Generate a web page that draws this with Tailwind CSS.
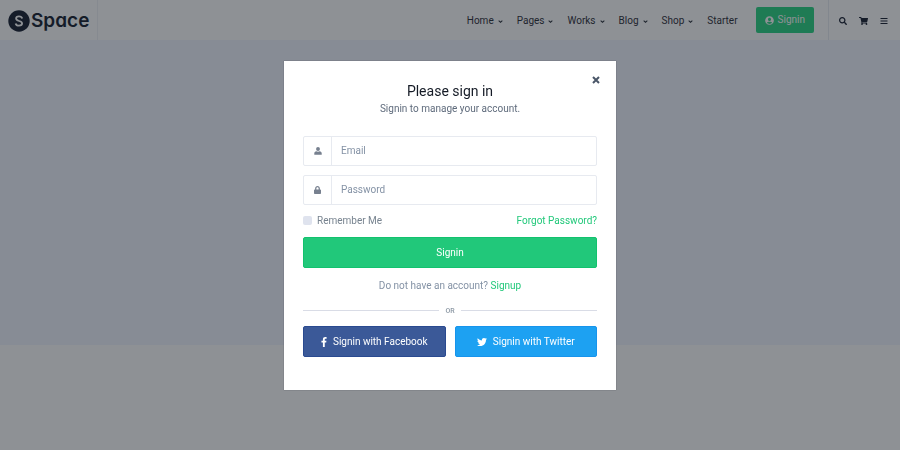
<!DOCTYPE html>
<html lang="en">
<head>
    <meta charset="UTF-8">
    <meta name="viewport" content="width=device-width, initial-scale=1.0">
    <title>Space - Sign in</title>
    <script src="https://cdn.jsdelivr.net/npm/@tailwindcss/browser@4"></script>
</head>
<body class="min-h-screen bg-white font-['Roboto',sans-serif] text-[10px] leading-4 text-[#4a5668]">

    <!-- Header -->
    <header class="flex h-10 items-stretch justify-between text-[#1e222b]">
        <a href="#" class="flex items-center gap-px border-r border-[#eef0f4] pt-px pr-2 pl-2">
            <svg class="h-6 w-[22px]" viewBox="0 0 22 24">
                <circle cx="11" cy="12" r="10.7" fill="#0c1426"/>
                <path d="M14.200 9.500C13.800 8.200 12.600 7.400 11 7.400c-1.800 0-2.900.9-2.900 2.200 0 3.100 6 1.700 6 4.700 0 1.400-1.300 2.300-3.100 2.300-1.700 0-3-.8-3.400-2.200" fill="none" stroke="#fff" stroke-width="1.800"/>
            </svg>
            <span class="text-[19px] leading-6 font-semibold text-[#0c1426] font-['Inter',sans-serif] [font-feature-settings:'cv11']">Space</span>
        </a>
        <div class="flex items-stretch">
            <nav class="flex items-center gap-3.5 pt-px pr-[18px] text-[#1e242e]">
                <a href="#" class="flex items-center gap-1">Home <svg class="mt-px size-[5px]" viewBox="0 0 6 6" fill="none" stroke="currentColor" stroke-width="1.300"><path d="M.8 2l2.200 2 2.200-2"/></svg></a>
                <a href="#" class="flex items-center gap-1">Pages <svg class="mt-px size-[5px]" viewBox="0 0 6 6" fill="none" stroke="currentColor" stroke-width="1.300"><path d="M.8 2l2.200 2 2.200-2"/></svg></a>
                <a href="#" class="flex items-center gap-1">Works <svg class="mt-px size-[5px]" viewBox="0 0 6 6" fill="none" stroke="currentColor" stroke-width="1.300"><path d="M.8 2l2.200 2 2.200-2"/></svg></a>
                <a href="#" class="flex items-center gap-1">Blog <svg class="mt-px size-[5px]" viewBox="0 0 6 6" fill="none" stroke="currentColor" stroke-width="1.300"><path d="M.8 2l2.200 2 2.200-2"/></svg></a>
                <a href="#" class="flex items-center gap-1">Shop <svg class="mt-px size-[5px]" viewBox="0 0 6 6" fill="none" stroke="currentColor" stroke-width="1.300"><path d="M.8 2l2.200 2 2.200-2"/></svg></a>
                <a href="#">Starter</a>
            </nav>
            <button type="button" class="mr-3.5 flex h-[26px] items-center gap-1 self-center rounded-xs bg-[#21d27d] px-[9px] text-white">
                <svg class="size-[9px]" viewBox="0 0 496 512" fill="currentColor"><path d="M248 8C111 8 0 119 0 256s111 248 248 248 248-111 248-248S385 8 248 8zm0 96c48.600 0 88 39.400 88 88s-39.400 88-88 88-88-39.400-88-88 39.400-88 88-88zm0 344c-58.700 0-111.300-26.600-146.500-68.200 18.800-35.400 55.600-59.800 98.500-59.800 2.400 0 4.800.4 7.100 1.100 13 4.200 26.600 6.900 40.900 6.900s28-2.700 40.900-6.900c2.300-.7 4.700-1.100 7.100-1.100 42.900 0 79.700 24.400 98.500 59.800C359.300 421.400 306.700 448 248 448z"/></svg>
                Signin
            </button>
            <div class="flex items-center gap-3 border-l border-[#e7eaf0] pt-px pr-3 pl-2.5 text-[#0c1426]">
                <button type="button" aria-label="Search"><svg class="size-2" viewBox="0 0 512 512" fill="currentColor"><path d="M505 442.700L405.300 343c-4.500-4.500-10.600-7-17-7H372c27.600-35.300 44-79.700 44-128C416 93.100 322.900 0 208 0S0 93.100 0 208s93.100 208 208 208c48.300 0 92.700-16.400 128-44v16.300c0 6.400 2.500 12.500 7 17l99.700 99.700c9.400 9.400 24.600 9.400 33.900 0l28.300-28.300c9.400-9.400 9.400-24.600.1-34zM208 336c-70.700 0-128-57.200-128-128 0-70.700 57.200-128 128-128 70.700 0 128 57.200 128 128 0 70.700-57.200 128-128 128z"/></svg></button>
                <button type="button" aria-label="Cart"><svg class="h-2 w-[9px]" viewBox="0 0 576 512" fill="currentColor"><path d="M528 301l47-208c4-15-8-29-23-29H159l-9-45C148 8 138 0 126 0H24C11 0 0 11 0 24v16c0 13 11 24 24 24h70l70 343c-17 10-28 28-28 49 0 31 25 56 56 56s56-25 56-56c0-16-6-30-17-40h210c-10 10-17 24-17 40 0 31 25 56 56 56s56-25 56-56c0-22-13-41-32-50l5-25c4-15-8-29-23-29H218l-7-32h294c11 0 21-8 23-19z"/></svg></button>
                <button type="button" aria-label="Menu"><svg class="size-2" viewBox="0 0 8 8" fill="currentColor"><path d="M.5 1h7v1h-7zM.5 3.500h7v1h-7zM.5 6h7v1h-7z"/></svg></button>
            </div>
        </div>
    </header>

    <!-- Hero -->
    <section class="h-[305px] bg-[#f1f4ff]"></section>

    <!-- Sign in modal -->
    <div class="fixed inset-0 flex items-center justify-center bg-[#1e242c]/50">
        <div role="dialog" aria-labelledby="signinTitle" class="relative w-full max-w-[332px] bg-white px-[19px] pt-5 pb-[33px] shadow-[0_0_1px_#1e222b80]">
            <button type="button" aria-label="Close" class="absolute top-[15px] right-4 text-[#4a5668]">
                <svg class="size-2" viewBox="0 0 8 8" fill="none" stroke="currentColor" stroke-width="2"><path d="M1 1l6 6M7 1L1 7"/></svg>
            </button>

            <div class="mb-[19px] text-center">
                <h1 id="signinTitle" class="text-sm text-[#151b26]">Please sign in</h1>
                <p class="text-[#5f6b7c]">Signin to manage your account.</p>
            </div>

            <form>
                <div class="mb-[9px] flex h-[30px] rounded-xs border border-[#e7eaf0]">
                    <label for="email" aria-label="Email" class="flex w-7 items-center justify-center border-r border-[#e7eaf0] text-[#77808f]">
                        <svg class="size-2" viewBox="0 0 14 14" fill="currentColor"><circle cx="7" cy="3.600" r="3.400"/><path d="M.5 13.500V11C.5 9 2 8 4 7.500c2 1 4 1 6 0 2 .5 3.500 1.500 3.500 3.500v2.500z"/></svg>
                    </label>
                    <input type="email" id="email" placeholder="Email" class="min-w-0 flex-1 px-[9px] outline-none placeholder:text-[#8492a5]">
                </div>
                <div class="mb-2 flex h-[30px] rounded-xs border border-[#e7eaf0]">
                    <label for="password" aria-label="Password" class="flex w-7 items-center justify-center border-r border-[#e7eaf0] text-[#77808f]">
                        <svg class="h-2 w-[7px]" viewBox="0 0 448 512" fill="currentColor"><path d="M400 224h-24v-72C376 68.200 307.800 0 224 0S72 68.200 72 152v72H48c-26.500 0-48 21.500-48 48v192c0 26.500 21.500 48 48 48h352c26.500 0 48-21.500 48-48V272c0-26.500-21.500-48-48-48zm-104 0H152v-72c0-39.700 32.300-72 72-72s72 32.300 72 72v72z"/></svg>
                    </label>
                    <input type="password" id="password" placeholder="Password" class="min-w-0 flex-1 px-[9px] outline-none placeholder:text-[#8492a5]">
                </div>
                <div class="mb-2 flex items-center justify-between">
                    <label for="remember" class="flex items-center gap-[5px] text-[#77838f]">
                        <input type="checkbox" id="remember" class="size-[9px] appearance-none rounded-xs bg-[#dfe3ee] checked:bg-[#21c87a]">
                        Remember Me
                    </label>
                    <a href="#" class="text-[#21c87a]">Forgot Password?</a>
                </div>
                <button type="submit" class="h-[31px] w-full rounded-xs border border-[#12c26e] bg-[#21c87a] pt-px text-white">Signin</button>
            </form>

            <p class="mt-2.5 text-center text-[#8492a5]">Do not have an account? <a href="#" class="text-[#21c87a]">Signup</a></p>

            <div class="mt-[9px] mb-[7px] flex items-center gap-1.5 text-[7px] font-medium text-[#8c98a4]">
                <hr class="flex-1 border-[#d9dce6]">OR<hr class="flex-1 border-[#d9dce6]">
            </div>

            <div class="grid grid-cols-2 gap-[9px] text-white">
                <button type="button" class="flex h-[31px] items-center justify-center gap-1.5 rounded-xs border border-[#2a4a90] bg-[#3b5998] pt-px">
                    <svg class="h-[10px] w-[6px]" viewBox="0 0 264 512" fill="currentColor"><path d="M215.800 85H264V3.600C255.700 2.400 227.100 0 193.800 0 124.300 0 76.700 42.400 76.700 120.300V192H0v91h76.700v229h94V283h73.600l11.700-91h-85.300v-62.700c0-26.300 7.300-44.300 45.100-44.300z"/></svg>
                    Signin with Facebook
                </button>
                <button type="button" class="flex h-[31px] items-center justify-center gap-1.5 rounded-xs border border-[#1794ec] bg-[#1da1f2] pt-px">
                    <svg class="size-[10px]" viewBox="0 0 512 512" fill="currentColor"><path d="M459.400 151.700c.3 4.500.3 9.100.3 13.600 0 138.700-105.600 298.600-298.600 298.600-59.500 0-114.700-17.200-161.100-47.100 8.400 1 16.600 1.300 25.300 1.300 49.100 0 94.200-16.600 130.300-44.800-46.100-1-84.800-31.200-98.100-72.800 6.500 1 13 1.600 19.800 1.600 9.400 0 18.800-1.300 27.600-3.600-48.100-9.700-84.100-52-84.100-103v-1.300c14 7.800 30.200 12.700 47.400 13.300-28.300-18.800-46.800-51-46.800-87.400 0-19.500 5.200-37.400 14.300-53 51.700 63.700 129.300 105.300 216.400 109.800-1.600-7.800-2.600-15.900-2.600-24 0-57.800 46.800-104.900 104.900-104.900 30.200 0 57.500 12.700 76.700 33.100 23.700-4.500 46.500-13.300 66.600-25.300-7.800 24.400-24.400 44.800-46.100 57.800 21.100-2.300 41.600-8.100 60.400-16.200-14.300 20.800-32.200 39.300-52.600 54.300z"/></svg>
                    Signin with Twitter
                </button>
            </div>
        </div>
    </div>

</body>
</html>
